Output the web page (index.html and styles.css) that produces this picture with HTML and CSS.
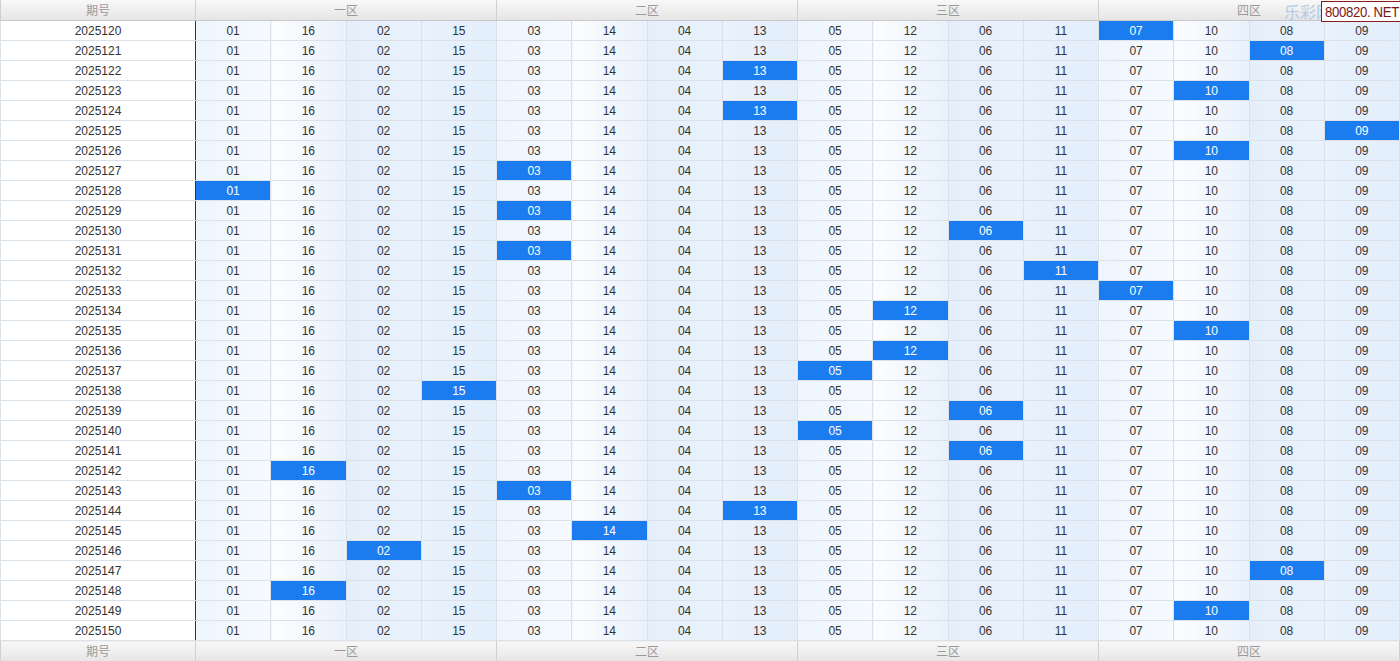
FILE: index.html
```html
<!DOCTYPE html>
<html lang="zh">
<head>
<meta charset="utf-8">
<title>走势</title>
<link rel="stylesheet" href="styles.css">
</head>
<body>
<div class="wrap">
<table class="chart">
<colgroup><col class="pcol"><col span="16"></colgroup>
<thead>
<tr><th class="p">期号</th><th colspan="4" class="zh">一区</th><th colspan="4" class="zh">二区</th><th colspan="4" class="zh">三区</th><th colspan="4" class="zh">四区</th></tr>
</thead>
<tbody>
<tr><td class="p">2025120</td><td class="a z">01</td><td class="b">16</td><td class="c">02</td><td class="d">15</td><td class="a z">03</td><td class="b">14</td><td class="c">04</td><td class="d">13</td><td class="a z">05</td><td class="b">12</td><td class="c">06</td><td class="d">11</td><td class="a z h">07</td><td class="b">10</td><td class="c">08</td><td class="d">09</td></tr>
<tr><td class="p">2025121</td><td class="a z">01</td><td class="b">16</td><td class="c">02</td><td class="d">15</td><td class="a z">03</td><td class="b">14</td><td class="c">04</td><td class="d">13</td><td class="a z">05</td><td class="b">12</td><td class="c">06</td><td class="d">11</td><td class="a z">07</td><td class="b">10</td><td class="c h">08</td><td class="d">09</td></tr>
<tr><td class="p">2025122</td><td class="a z">01</td><td class="b">16</td><td class="c">02</td><td class="d">15</td><td class="a z">03</td><td class="b">14</td><td class="c">04</td><td class="d h">13</td><td class="a z">05</td><td class="b">12</td><td class="c">06</td><td class="d">11</td><td class="a z">07</td><td class="b">10</td><td class="c">08</td><td class="d">09</td></tr>
<tr><td class="p">2025123</td><td class="a z">01</td><td class="b">16</td><td class="c">02</td><td class="d">15</td><td class="a z">03</td><td class="b">14</td><td class="c">04</td><td class="d">13</td><td class="a z">05</td><td class="b">12</td><td class="c">06</td><td class="d">11</td><td class="a z">07</td><td class="b h">10</td><td class="c">08</td><td class="d">09</td></tr>
<tr><td class="p">2025124</td><td class="a z">01</td><td class="b">16</td><td class="c">02</td><td class="d">15</td><td class="a z">03</td><td class="b">14</td><td class="c">04</td><td class="d h">13</td><td class="a z">05</td><td class="b">12</td><td class="c">06</td><td class="d">11</td><td class="a z">07</td><td class="b">10</td><td class="c">08</td><td class="d">09</td></tr>
<tr><td class="p">2025125</td><td class="a z">01</td><td class="b">16</td><td class="c">02</td><td class="d">15</td><td class="a z">03</td><td class="b">14</td><td class="c">04</td><td class="d">13</td><td class="a z">05</td><td class="b">12</td><td class="c">06</td><td class="d">11</td><td class="a z">07</td><td class="b">10</td><td class="c">08</td><td class="d h">09</td></tr>
<tr><td class="p">2025126</td><td class="a z">01</td><td class="b">16</td><td class="c">02</td><td class="d">15</td><td class="a z">03</td><td class="b">14</td><td class="c">04</td><td class="d">13</td><td class="a z">05</td><td class="b">12</td><td class="c">06</td><td class="d">11</td><td class="a z">07</td><td class="b h">10</td><td class="c">08</td><td class="d">09</td></tr>
<tr><td class="p">2025127</td><td class="a z">01</td><td class="b">16</td><td class="c">02</td><td class="d">15</td><td class="a z h">03</td><td class="b">14</td><td class="c">04</td><td class="d">13</td><td class="a z">05</td><td class="b">12</td><td class="c">06</td><td class="d">11</td><td class="a z">07</td><td class="b">10</td><td class="c">08</td><td class="d">09</td></tr>
<tr><td class="p">2025128</td><td class="a z h">01</td><td class="b">16</td><td class="c">02</td><td class="d">15</td><td class="a z">03</td><td class="b">14</td><td class="c">04</td><td class="d">13</td><td class="a z">05</td><td class="b">12</td><td class="c">06</td><td class="d">11</td><td class="a z">07</td><td class="b">10</td><td class="c">08</td><td class="d">09</td></tr>
<tr><td class="p">2025129</td><td class="a z">01</td><td class="b">16</td><td class="c">02</td><td class="d">15</td><td class="a z h">03</td><td class="b">14</td><td class="c">04</td><td class="d">13</td><td class="a z">05</td><td class="b">12</td><td class="c">06</td><td class="d">11</td><td class="a z">07</td><td class="b">10</td><td class="c">08</td><td class="d">09</td></tr>
<tr><td class="p">2025130</td><td class="a z">01</td><td class="b">16</td><td class="c">02</td><td class="d">15</td><td class="a z">03</td><td class="b">14</td><td class="c">04</td><td class="d">13</td><td class="a z">05</td><td class="b">12</td><td class="c h">06</td><td class="d">11</td><td class="a z">07</td><td class="b">10</td><td class="c">08</td><td class="d">09</td></tr>
<tr><td class="p">2025131</td><td class="a z">01</td><td class="b">16</td><td class="c">02</td><td class="d">15</td><td class="a z h">03</td><td class="b">14</td><td class="c">04</td><td class="d">13</td><td class="a z">05</td><td class="b">12</td><td class="c">06</td><td class="d">11</td><td class="a z">07</td><td class="b">10</td><td class="c">08</td><td class="d">09</td></tr>
<tr><td class="p">2025132</td><td class="a z">01</td><td class="b">16</td><td class="c">02</td><td class="d">15</td><td class="a z">03</td><td class="b">14</td><td class="c">04</td><td class="d">13</td><td class="a z">05</td><td class="b">12</td><td class="c">06</td><td class="d h">11</td><td class="a z">07</td><td class="b">10</td><td class="c">08</td><td class="d">09</td></tr>
<tr><td class="p">2025133</td><td class="a z">01</td><td class="b">16</td><td class="c">02</td><td class="d">15</td><td class="a z">03</td><td class="b">14</td><td class="c">04</td><td class="d">13</td><td class="a z">05</td><td class="b">12</td><td class="c">06</td><td class="d">11</td><td class="a z h">07</td><td class="b">10</td><td class="c">08</td><td class="d">09</td></tr>
<tr><td class="p">2025134</td><td class="a z">01</td><td class="b">16</td><td class="c">02</td><td class="d">15</td><td class="a z">03</td><td class="b">14</td><td class="c">04</td><td class="d">13</td><td class="a z">05</td><td class="b h">12</td><td class="c">06</td><td class="d">11</td><td class="a z">07</td><td class="b">10</td><td class="c">08</td><td class="d">09</td></tr>
<tr><td class="p">2025135</td><td class="a z">01</td><td class="b">16</td><td class="c">02</td><td class="d">15</td><td class="a z">03</td><td class="b">14</td><td class="c">04</td><td class="d">13</td><td class="a z">05</td><td class="b">12</td><td class="c">06</td><td class="d">11</td><td class="a z">07</td><td class="b h">10</td><td class="c">08</td><td class="d">09</td></tr>
<tr><td class="p">2025136</td><td class="a z">01</td><td class="b">16</td><td class="c">02</td><td class="d">15</td><td class="a z">03</td><td class="b">14</td><td class="c">04</td><td class="d">13</td><td class="a z">05</td><td class="b h">12</td><td class="c">06</td><td class="d">11</td><td class="a z">07</td><td class="b">10</td><td class="c">08</td><td class="d">09</td></tr>
<tr><td class="p">2025137</td><td class="a z">01</td><td class="b">16</td><td class="c">02</td><td class="d">15</td><td class="a z">03</td><td class="b">14</td><td class="c">04</td><td class="d">13</td><td class="a z h">05</td><td class="b">12</td><td class="c">06</td><td class="d">11</td><td class="a z">07</td><td class="b">10</td><td class="c">08</td><td class="d">09</td></tr>
<tr><td class="p">2025138</td><td class="a z">01</td><td class="b">16</td><td class="c">02</td><td class="d h">15</td><td class="a z">03</td><td class="b">14</td><td class="c">04</td><td class="d">13</td><td class="a z">05</td><td class="b">12</td><td class="c">06</td><td class="d">11</td><td class="a z">07</td><td class="b">10</td><td class="c">08</td><td class="d">09</td></tr>
<tr><td class="p">2025139</td><td class="a z">01</td><td class="b">16</td><td class="c">02</td><td class="d">15</td><td class="a z">03</td><td class="b">14</td><td class="c">04</td><td class="d">13</td><td class="a z">05</td><td class="b">12</td><td class="c h">06</td><td class="d">11</td><td class="a z">07</td><td class="b">10</td><td class="c">08</td><td class="d">09</td></tr>
<tr><td class="p">2025140</td><td class="a z">01</td><td class="b">16</td><td class="c">02</td><td class="d">15</td><td class="a z">03</td><td class="b">14</td><td class="c">04</td><td class="d">13</td><td class="a z h">05</td><td class="b">12</td><td class="c">06</td><td class="d">11</td><td class="a z">07</td><td class="b">10</td><td class="c">08</td><td class="d">09</td></tr>
<tr><td class="p">2025141</td><td class="a z">01</td><td class="b">16</td><td class="c">02</td><td class="d">15</td><td class="a z">03</td><td class="b">14</td><td class="c">04</td><td class="d">13</td><td class="a z">05</td><td class="b">12</td><td class="c h">06</td><td class="d">11</td><td class="a z">07</td><td class="b">10</td><td class="c">08</td><td class="d">09</td></tr>
<tr><td class="p">2025142</td><td class="a z">01</td><td class="b h">16</td><td class="c">02</td><td class="d">15</td><td class="a z">03</td><td class="b">14</td><td class="c">04</td><td class="d">13</td><td class="a z">05</td><td class="b">12</td><td class="c">06</td><td class="d">11</td><td class="a z">07</td><td class="b">10</td><td class="c">08</td><td class="d">09</td></tr>
<tr><td class="p">2025143</td><td class="a z">01</td><td class="b">16</td><td class="c">02</td><td class="d">15</td><td class="a z h">03</td><td class="b">14</td><td class="c">04</td><td class="d">13</td><td class="a z">05</td><td class="b">12</td><td class="c">06</td><td class="d">11</td><td class="a z">07</td><td class="b">10</td><td class="c">08</td><td class="d">09</td></tr>
<tr><td class="p">2025144</td><td class="a z">01</td><td class="b">16</td><td class="c">02</td><td class="d">15</td><td class="a z">03</td><td class="b">14</td><td class="c">04</td><td class="d h">13</td><td class="a z">05</td><td class="b">12</td><td class="c">06</td><td class="d">11</td><td class="a z">07</td><td class="b">10</td><td class="c">08</td><td class="d">09</td></tr>
<tr><td class="p">2025145</td><td class="a z">01</td><td class="b">16</td><td class="c">02</td><td class="d">15</td><td class="a z">03</td><td class="b h">14</td><td class="c">04</td><td class="d">13</td><td class="a z">05</td><td class="b">12</td><td class="c">06</td><td class="d">11</td><td class="a z">07</td><td class="b">10</td><td class="c">08</td><td class="d">09</td></tr>
<tr><td class="p">2025146</td><td class="a z">01</td><td class="b">16</td><td class="c h">02</td><td class="d">15</td><td class="a z">03</td><td class="b">14</td><td class="c">04</td><td class="d">13</td><td class="a z">05</td><td class="b">12</td><td class="c">06</td><td class="d">11</td><td class="a z">07</td><td class="b">10</td><td class="c">08</td><td class="d">09</td></tr>
<tr><td class="p">2025147</td><td class="a z">01</td><td class="b">16</td><td class="c">02</td><td class="d">15</td><td class="a z">03</td><td class="b">14</td><td class="c">04</td><td class="d">13</td><td class="a z">05</td><td class="b">12</td><td class="c">06</td><td class="d">11</td><td class="a z">07</td><td class="b">10</td><td class="c h">08</td><td class="d">09</td></tr>
<tr><td class="p">2025148</td><td class="a z">01</td><td class="b h">16</td><td class="c">02</td><td class="d">15</td><td class="a z">03</td><td class="b">14</td><td class="c">04</td><td class="d">13</td><td class="a z">05</td><td class="b">12</td><td class="c">06</td><td class="d">11</td><td class="a z">07</td><td class="b">10</td><td class="c">08</td><td class="d">09</td></tr>
<tr><td class="p">2025149</td><td class="a z">01</td><td class="b">16</td><td class="c">02</td><td class="d">15</td><td class="a z">03</td><td class="b">14</td><td class="c">04</td><td class="d">13</td><td class="a z">05</td><td class="b">12</td><td class="c">06</td><td class="d">11</td><td class="a z">07</td><td class="b h">10</td><td class="c">08</td><td class="d">09</td></tr>
<tr><td class="p">2025150</td><td class="a z">01</td><td class="b">16</td><td class="c">02</td><td class="d">15</td><td class="a z">03</td><td class="b">14</td><td class="c">04</td><td class="d">13</td><td class="a z">05</td><td class="b">12</td><td class="c">06</td><td class="d">11</td><td class="a z">07</td><td class="b">10</td><td class="c">08</td><td class="d">09</td></tr>
</tbody>
<tfoot>
<tr><th class="p">期号</th><th colspan="4" class="zh">一区</th><th colspan="4" class="zh">二区</th><th colspan="4" class="zh">三区</th><th colspan="4" class="zh">四区</th></tr>
</tfoot>
</table>
<span class="mark-cn">乐彩网</span>
<span class="mark-box"><span class="mark-text">800820. NET</span></span>
</div>
</body>
</html>
```
FILE: styles.css
```css
html, body {
  margin: 0;
  padding: 0;
  background: #ffffff;
}
.wrap {
  position: relative;
  width: 1400px;
  height: 661px;
  overflow: hidden;
}
.chart {
  width: 1400px;
  border-collapse: collapse;
  table-layout: fixed;
  font-family: "Liberation Sans", Arial, "Noto Sans CJK SC", sans-serif;
  font-size: 12px;
  color: #333;
}
.pcol { width: 195px; }
.chart th {
  padding: 0;
  font-weight: normal;
  color: #9a9a9a;
  font-size: 12px;
  font-family: "Noto Sans CJK SC", "Liberation Sans", sans-serif;
  background: linear-gradient(#f8f8f8, #e5e5e5);
  border-left: 1px solid #d0d0d0;
  border-right: 1px solid #d0d0d0;
  text-align: center;
}
.chart thead th {
  height: 20px;
  line-height: 20px;
  border-bottom: 1px solid #c8c8c8;
}
.chart tfoot th {
  height: 20px;
  line-height: 20px;
  border-top: 1px solid #c8c8c8;
}
.chart td {
  height: 17px;
  padding: 2px 0 0 0;
  text-align: center;
  line-height: 17px;
  border: 1px solid #dbe1e8;
}
.chart td.p { background: #ffffff; border-right: 1px solid #333; }
.chart td.a { background: linear-gradient(90deg, #eef5fd, #f6faff); }
.chart td.b { background: linear-gradient(90deg, #fcfdff, #e8f1fc); }
.chart td.c { background: linear-gradient(90deg, #e4effb, #e9f2fc); }
.chart td.d { background: linear-gradient(90deg, #e8f2fd, #e3eefb); }
.chart td.z { border-left: 1px solid #333; }
.chart td.h {
  background: #1b7cf0;
  color: #ffffff;
}
.mark-cn {
  position: absolute;
  top: 1px;
  left: 1284px;
  font-family: "Noto Sans CJK SC", sans-serif;
  font-size: 16px;
  line-height: 20px;
  color: #b3cbe6;
  white-space: nowrap;
}
.mark-box {
  position: absolute;
  top: 1px;
  left: 1321px;
  width: 82px;
  height: 21px;
  box-sizing: border-box;
  background: #ffffff;
  border: 1px solid #8c1c1c;
  padding-left: 3px;
  white-space: nowrap;
  overflow: hidden;
}
.mark-text {
  display: inline-block;
  color: #7d1414;
  font-family: "Liberation Sans", Arial, sans-serif;
  font-size: 15px;
  line-height: 19px;
  letter-spacing: -0.4px;
  transform: scaleX(0.88);
  transform-origin: left center;
}
```
